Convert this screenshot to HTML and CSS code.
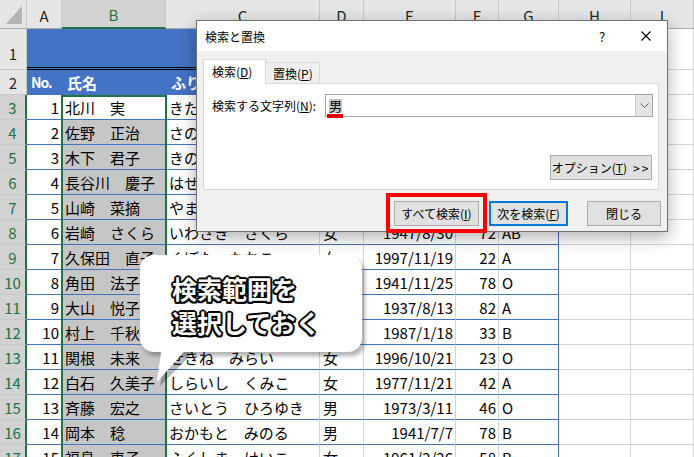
FILE: index.html
```html
<!DOCTYPE html>
<html lang="ja">
<head>
<meta charset="utf-8">
<title>検索と置換</title>
<link rel="stylesheet" href="styles.css">
</head>
<body>
<div class="sheet">
  <div class="hd corner"><span class="tri"></span></div>
  <div class="hd">A</div><div class="hd on">B</div><div class="hd">C</div><div class="hd">D</div><div class="hd">E</div><div class="hd">F</div><div class="hd">G</div><div class="hd">H</div><div class="hd">I</div>

  <div class="rh tall">1</div><div class="band"></div><div class="c"></div><div class="c"></div>

  <div class="rh">2</div><div class="c th no">No.</div><div class="c th">氏名</div><div class="c th">ふりがな</div><div class="c th">性別</div><div class="c th">生年月日</div><div class="c th">年齢</div><div class="c th">血液型</div><div class="c"></div><div class="c"></div>

  <div class="rh on">3</div><div class="c t n">1</div><div class="c t b act">北川　実</div><div class="c t">きたがわ　みのる</div><div class="c t">男</div><div class="c t n">1965/4/2</div><div class="c t n">55</div><div class="c t g">A</div><div class="c"></div><div class="c"></div>
  <div class="rh on">4</div><div class="c t n">2</div><div class="c t b">佐野　正治</div><div class="c t">さの　まさはる</div><div class="c t">男</div><div class="c t n">1958/6/15</div><div class="c t n">61</div><div class="c t g">O</div><div class="c"></div><div class="c"></div>
  <div class="rh on">5</div><div class="c t n">3</div><div class="c t b">木下　君子</div><div class="c t">きのした　きみこ</div><div class="c t">女</div><div class="c t n">1950/9/3</div><div class="c t n">69</div><div class="c t g">A</div><div class="c"></div><div class="c"></div>
  <div class="rh on">6</div><div class="c t n">4</div><div class="c t b">長谷川　慶子</div><div class="c t">はせがわ　けいこ</div><div class="c t">女</div><div class="c t n">1968/12/1</div><div class="c t n">51</div><div class="c t g">B</div><div class="c"></div><div class="c"></div>
  <div class="rh on">7</div><div class="c t n">5</div><div class="c t b">山崎　菜摘</div><div class="c t">やまざき　なつみ</div><div class="c t">女</div><div class="c t n">1990/5/22</div><div class="c t n">29</div><div class="c t g">A</div><div class="c"></div><div class="c"></div>
  <div class="rh on">8</div><div class="c t n">6</div><div class="c t b">岩崎　さくら</div><div class="c t">いわさき　さくら</div><div class="c t">女</div><div class="c t n">1947/8/30</div><div class="c t n">72</div><div class="c t g">AB</div><div class="c"></div><div class="c"></div>
  <div class="rh on">9</div><div class="c t n">7</div><div class="c t b">久保田　直子</div><div class="c t">くぼた　なおこ</div><div class="c t">女</div><div class="c t n">1997/11/19</div><div class="c t n">22</div><div class="c t g">A</div><div class="c"></div><div class="c"></div>
  <div class="rh on">10</div><div class="c t n">8</div><div class="c t b">角田　法子</div><div class="c t">つのだ　のりこ</div><div class="c t">女</div><div class="c t n">1941/11/25</div><div class="c t n">78</div><div class="c t g">O</div><div class="c"></div><div class="c"></div>
  <div class="rh on">11</div><div class="c t n">9</div><div class="c t b">大山　悦子</div><div class="c t">おおやま　えつこ</div><div class="c t">女</div><div class="c t n">1937/8/13</div><div class="c t n">82</div><div class="c t g">A</div><div class="c"></div><div class="c"></div>
  <div class="rh on">12</div><div class="c t n">10</div><div class="c t b">村上　千秋</div><div class="c t">むらかみ　ちあき</div><div class="c t">女</div><div class="c t n">1987/1/18</div><div class="c t n">33</div><div class="c t g">B</div><div class="c"></div><div class="c"></div>
  <div class="rh on">13</div><div class="c t n">11</div><div class="c t b">関根　未来</div><div class="c t">せきね　みらい</div><div class="c t">女</div><div class="c t n">1996/10/21</div><div class="c t n">23</div><div class="c t g">O</div><div class="c"></div><div class="c"></div>
  <div class="rh on">14</div><div class="c t n">12</div><div class="c t b">白石　久美子</div><div class="c t">しらいし　くみこ</div><div class="c t">女</div><div class="c t n">1977/11/21</div><div class="c t n">42</div><div class="c t g">A</div><div class="c"></div><div class="c"></div>
  <div class="rh on">15</div><div class="c t n">13</div><div class="c t b">斉藤　宏之</div><div class="c t">さいとう　ひろゆき</div><div class="c t">男</div><div class="c t n">1973/3/11</div><div class="c t n">46</div><div class="c t g">O</div><div class="c"></div><div class="c"></div>
  <div class="rh on">16</div><div class="c t n">14</div><div class="c t b">岡本　稔</div><div class="c t">おかもと　みのる</div><div class="c t">男</div><div class="c t n">1941/7/7</div><div class="c t n">78</div><div class="c t g">B</div><div class="c"></div><div class="c"></div>
  <div class="rh on">17</div><div class="c t n">15</div><div class="c t b">福島　恵子</div><div class="c t">ふくしま　けいこ</div><div class="c t">女</div><div class="c t n">1961/2/26</div><div class="c t n">58</div><div class="c t g">B</div><div class="c"></div><div class="c"></div>
</div>

<div class="selbox"></div>

<div class="dialog">
  <div class="titlebar">
    <span class="title">検索と置換</span>
    <span class="help">?</span>
    <svg class="xbtn" width="10" height="10" viewBox="0 0 10 10"><path d="M0.5 0.5 L9.5 9.5 M9.5 0.5 L0.5 9.5" stroke="#000" stroke-width="1.1" fill="none"/></svg>
  </div>
  <div class="dlg-body">
    <div class="tabs">
      <div class="tab active">検索(<u>D</u>)</div>
      <div class="tab">置換(<u>P</u>)</div>
    </div>
    <div class="panel">
      <div class="find-row">
        <span class="lbl">検索する文字列(<u>N</u>):</span>
        <div class="combo">
          <span class="val">男</span>
          <span class="drop"><svg width="9" height="5" viewBox="0 0 9 5"><path d="M0.5 0.5 L4.5 4.5 L8.5 0.5" stroke="#606060" fill="none"/></svg></span>
        </div>
      </div>
      <div class="opt-row"><span class="btn opt">オプション(<u>T</u>)<span class="gt">&gt;&gt;</span></span></div>
    </div>
    <div class="btn-row">
      <span class="btn findall">すべて検索(<u>I</u>)</span>
      <span class="btn next">次を検索(<u>F</u>)</span>
      <span class="btn closeb">閉じる</span>
    </div>
  </div>
</div>

<div class="redbox"></div>

<div class="callout">
  <div class="bubble">検索範囲を<br>選択しておく</div>
  <svg class="tail" width="60" height="45" viewBox="0 0 60 45">
    <polygon points="26,7 54,7 20,41" fill="rgba(0,0,0,0.28)"/>
    <polygon points="22,0 50,0 17,37" fill="#fff"/>
  </svg>
</div>
</body>
</html>
```

FILE: styles.css
```css
* { box-sizing: border-box; }
body {
  margin: 0;
  width: 694px;
  height: 457px;
  overflow: hidden;
  position: relative;
  background: #fff;
  color: #000;
  font-family: "Noto Sans CJK JP", "Noto Sans", sans-serif;
}

/* spreadsheet */
.sheet {
  display: grid;
  grid-template-columns: 27px 35px 104px 154px 44px 92px 43px 60px 72px 63px;
  grid-template-rows: 29px 41px repeat(16, 25px);
}
.hd {
  background: #e6e6e6;
  border-right: 1px solid #c8c8c8;
  border-bottom: 1px solid #ababab;
  display: flex;
  align-items: center;
  justify-content: center;
  font-size: 15px;
  color: #262626;
  padding-top: 2px;
}
.hd.corner {
  justify-content: flex-end;
  align-items: flex-end;
  padding: 0 4px 4px 0;
}
.tri {
  width: 16px;
  height: 18px;
  background: #b5b5b5;
  clip-path: polygon(100% 0, 100% 100%, 0 100%);
}
.hd.on {
  background: #d2d2d2;
  color: #217346;
  border-bottom: 2px solid #217346;
}
.rh {
  background: #e6e6e6;
  border-right: 1px solid #c8c8c8;
  border-bottom: 1px solid #c8c8c8;
  display: flex;
  align-items: center;
  justify-content: center;
  font-size: 15px;
  color: #262626;
}
.rh.tall { align-items: flex-end; padding-bottom: 5px; }
.rh.on {
  background: #d2d2d2;
  color: #217346;
  border-right: 2px solid #217346;
}
.c {
  border-right: 1px solid #d4d4d4;
  border-bottom: 1px solid #d4d4d4;
  display: flex;
  align-items: center;
  padding: 0 2px 0 3px;
  font-size: 15px;
  white-space: nowrap;
  overflow: hidden;
}
.t { border-bottom-color: #4472c4; }
.g { border-right-color: #4472c4; }
.n { justify-content: flex-end; }
.b { background: #c6c6c6; }
.b.act { background: #fff; }
.band {
  grid-column: 2 / span 7;
  background: #4472c4;
  border-bottom: 3px double #000;
}
.th {
  background: #4472c4;
  color: #fff;
  font-weight: 700;
  border-right-color: #4472c4;
  border-bottom-color: #4472c4;
  padding-left: 5px;
}
.th.no { font-size: 14px; letter-spacing: -1px; padding-left: 4px; }

.selbox {
  position: absolute;
  left: 61px;
  top: 95px;
  width: 106px;
  height: 380px;
  border: 2px solid #217346;
}

/* dialog */
.dialog {
  position: absolute;
  left: 196px;
  top: 20px;
  width: 472px;
  height: 212px;
  border: 1px solid #707070;
  background: #f0f0f0;
  box-shadow: 0 5px 16px rgba(0, 0, 0, 0.32);
  display: flex;
  flex-direction: column;
  font-size: 12px;
  color: #000;
}
.titlebar {
  height: 30px;
  background: #fff;
  display: flex;
  align-items: center;
  padding-left: 8px;
  padding-right: 16px;
}
.title { flex: 1; }
.help { font-size: 13px; width: 12px; text-align: center; margin-right: 33px; }
.xbtn { display: block; }
.dlg-body {
  flex: 1;
  padding: 8px 6px 0 6px;
  display: flex;
  flex-direction: column;
}
.tabs {
  display: flex;
  align-items: flex-end;
  height: 25px;
  margin-bottom: -1px;
  position: relative;
  z-index: 1;
}
.tab {
  height: 21px;
  width: 54px;
  margin-bottom: 1px;
  border: 1px solid #d9d9d9;
  border-bottom: none;
  border-left: none;
  background: #f0f0f0;
  padding-left: 7px;
  display: flex;
  align-items: center;
}
.tab.active {
  height: 25px;
  width: 63px;
  margin-bottom: 0;
  border-left: 1px solid #d9d9d9;
  background: #fff;
  padding-left: 8px;
  padding-bottom: 1px;
}
.panel {
  height: 107px;
  margin-right: 2px;
  border: 1px solid #d9d9d9;
  background: #fff;
  padding: 10px 5px 9px 8px;
  display: flex;
  flex-direction: column;
  justify-content: space-between;
}
.find-row {
  display: flex;
  align-items: center;
  height: 23px;
}
.lbl { width: 113px; }
.combo {
  width: 328px;
  height: 23px;
  border: 1px solid #a5a5a5;
  background: #fff;
  display: flex;
  align-items: center;
}
.val {
  margin-left: 3px;
  background: #c4c4c4;
  font-size: 13px;
  line-height: 13px;
  padding: 0 0 1px;
  position: relative;
}
.val::after {
  content: "";
  position: absolute;
  left: -2px;
  right: -1px;
  bottom: -5px;
  height: 4px;
  background: #e00000;
}
.drop {
  margin-left: auto;
  width: 17px;
  height: 100%;
  background: #e5e5e5;
  border-left: 1px solid #c9c9c9;
  display: flex;
  align-items: center;
  justify-content: center;
}
.drop svg { display: block; }
.opt-row { display: flex; justify-content: flex-end; }
.btn {
  height: 25px;
  background: #e1e1e1;
  border: 1px solid #adadad;
  display: flex;
  align-items: center;
  justify-content: center;
  white-space: nowrap;
}
.opt { width: 102px; margin-right: 1px; }
.gt { margin-left: 6px; letter-spacing: 2px; }
.btn-row {
  display: flex;
  justify-content: flex-end;
  margin-top: 11px;
}
.findall { width: 85px; margin-right: 10px; }
.next { width: 79px; margin-right: 19px; border: 2px solid #0078d7; }
.closeb { width: 74px; }

.redbox {
  position: absolute;
  left: 386px;
  top: 193px;
  width: 101px;
  height: 40px;
  border: 4px solid #ff0000;
}

/* callout */
.callout {
  position: absolute;
  left: 140px;
  top: 255px;
  width: 222px;
  height: 97px;
}
.bubble {
  height: 100%;
  background: #fff;
  border-radius: 14px;
  box-shadow: 3px 4px 4px rgba(0, 0, 0, 0.3);
  padding: 16px 0 0 32px;
  font-size: 25px;
  font-weight: 700;
  line-height: 34px;
  color: #fff;
  text-shadow:
    2px 0 0 #000, -2px 0 0 #000, 0 2px 0 #000, 0 -2px 0 #000,
    1.5px 1.5px 0 #000, -1.5px 1.5px 0 #000, 1.5px -1.5px 0 #000, -1.5px -1.5px 0 #000,
    1px 0 0 #000, -1px 0 0 #000, 0 1px 0 #000, 0 -1px 0 #000;
}
.tail {
  position: absolute;
  left: 0;
  top: 90px;
}
```
